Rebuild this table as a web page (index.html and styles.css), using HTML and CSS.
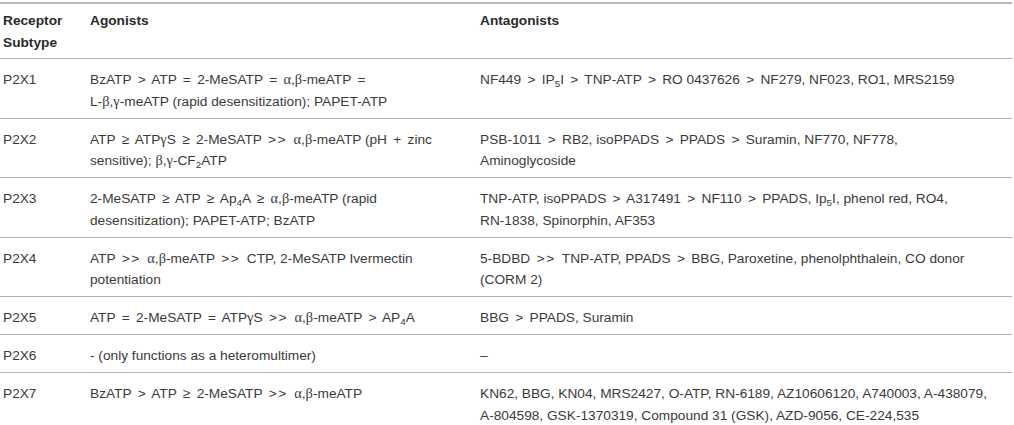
FILE: index.html
```html
<!DOCTYPE html>
<html>
<head>
<meta charset="utf-8">
<link rel="stylesheet" href="styles.css">
</head>
<body>
<table class="rt">
  <colgroup>
    <col class="c1"><col class="c2"><col class="c3">
  </colgroup>
  <thead>
    <tr><th>Receptor Subtype</th><th>Agonists</th><th>Antagonists</th></tr>
  </thead>
  <tbody>
    <tr>
      <td>P2X1</td>
      <td>BzATP <span class="op">&gt;</span> ATP <span class="op">=</span> 2-MeSATP <span class="op">=</span> <span class="g">α</span>,<span class="g">β</span>-meATP <span class="op">=</span> <span class="nw">L-<span class="g">β</span>,<span class="g">γ</span>-meATP</span> (rapid desensitization); PAPET-ATP</td>
      <td>NF449 <span class="op">&gt;</span> IP<sub>5</sub>I <span class="op">&gt;</span> TNP-ATP <span class="op">&gt;</span> RO 0437626 <span class="op">&gt;</span> NF279, NF023, RO1, MRS2159</td>
    </tr>
    <tr>
      <td>P2X2</td>
      <td>ATP <span class="op">≥</span> ATP<span class="g">γ</span>S <span class="op">≥</span> 2-MeSATP <span class="op dbl">&gt;&gt;</span> <span class="g">α</span>,<span class="g">β</span>-meATP (pH <span class="op">+</span> zinc sensitive); <span class="nw"><span class="g">β</span>,<span class="g">γ</span>-CF<sub>2</sub>ATP</span></td>
      <td>PSB-1011 <span class="op">&gt;</span> RB2, isoPPADS <span class="op">&gt;</span> PPADS <span class="op">&gt;</span> Suramin, NF770, NF778, Aminoglycoside</td>
    </tr>
    <tr>
      <td>P2X3</td>
      <td>2-MeSATP <span class="op">≥</span> ATP <span class="op">≥</span> Ap<sub>4</sub>A <span class="op">≥</span> <span class="g">α</span>,<span class="g">β</span>-meATP (rapid desensitization); PAPET-ATP; BzATP</td>
      <td>TNP-ATP, isoPPADS <span class="op">&gt;</span> A317491 <span class="op">&gt;</span> NF110 <span class="op">&gt;</span> PPADS, Ip<sub>5</sub>I, phenol red, RO4, <span class="nw">RN-1838,</span> Spinorphin, AF353</td>
    </tr>
    <tr>
      <td>P2X4</td>
      <td>ATP <span class="op dbl">&gt;&gt;</span> <span class="g">α</span>,<span class="g">β</span>-meATP <span class="op dbl">&gt;&gt;</span> CTP, 2-MeSATP Ivermectin potentiation</td>
      <td>5-BDBD <span class="op dbl">&gt;&gt;</span> TNP-ATP, PPADS <span class="op">&gt;</span> BBG, Paroxetine, phenolphthalein, CO donor (CORM 2)</td>
    </tr>
    <tr>
      <td>P2X5</td>
      <td>ATP <span class="op">=</span> 2-MeSATP <span class="op">=</span> ATP<span class="g">γ</span>S <span class="op dbl">&gt;&gt;</span> <span class="g">α</span>,<span class="g">β</span>-meATP <span class="op">&gt;</span> AP<sub>4</sub>A</td>
      <td>BBG <span class="op">&gt;</span> PPADS, Suramin</td>
    </tr>
    <tr>
      <td>P2X6</td>
      <td>- (only functions as a heteromultimer)</td>
      <td>–</td>
    </tr>
    <tr>
      <td>P2X7</td>
      <td>BzATP <span class="op">&gt;</span> ATP <span class="op">≥</span> 2-MeSATP <span class="op dbl">&gt;&gt;</span> <span class="g">α</span>,<span class="g">β</span>-meATP</td>
      <td>KN62, BBG, KN04, MRS2427, O-ATP, RN-6189, AZ10606120, A740003, <span class="nw">A-438079,</span> <span class="nw">A-804598,</span> GSK-1370319, Compound 31 (GSK), AZD-9056, CE-224,535</td>
    </tr>
  </tbody>
</table>
</body>
</html>
```
FILE: styles.css
```css
html, body {
  margin: 0;
  padding: 0;
  background: #ffffff;
}
body {
  padding-top: 2px;
  font-family: "Liberation Sans", Arial, sans-serif;
  font-size: 13.7px;
  color: #3a3a3a;
}
.rt {
  width: 1012px;
  border-collapse: collapse;
  table-layout: fixed;
  border-top: 2px solid #b8b8b8;
}
.c1 { width: 87px; }
.c2 { width: 390px; }
.c3 { width: 535px; }
.rt th, .rt td {
  text-align: left;
  vertical-align: top;
  line-height: 21.5px;
  padding: 10px 4px 5.5px 3px;
  border-bottom: 1px solid #b0b0b0;
}
.rt td:nth-child(2) {
  padding-right: 32px;
}
.rt td:nth-child(3) {
  padding-right: 19px;
}
.rt th {
  font-weight: bold;
  color: #2a2a2a;
  padding-top: 6px;
  padding-bottom: 5px;
}
.g {
  font-family: "Liberation Serif", "Times New Roman", serif;
  font-size: 1.05em;
}
.op {
  margin: 0 2.5px;
}
.op.dbl {
  letter-spacing: 0.12em;
}
.nw {
  white-space: nowrap;
}
sub {
  font-size: 0.72em;
  line-height: 0;
  vertical-align: -0.3em;
}
```
